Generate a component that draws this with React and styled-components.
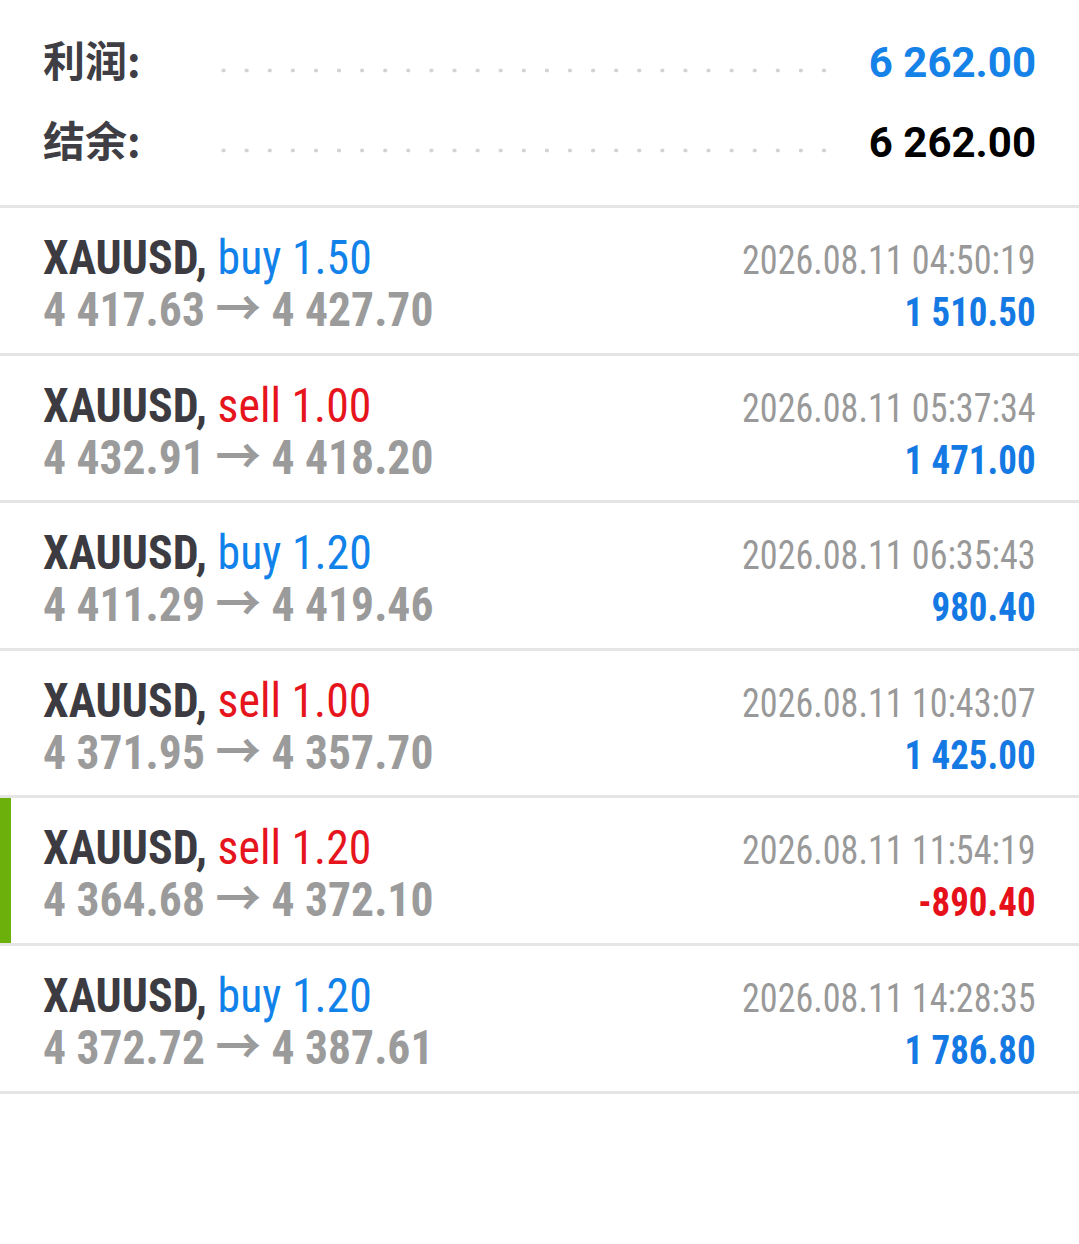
import React from 'react';
import styled, { createGlobalStyle } from 'styled-components';

const GlobalStyle = createGlobalStyle`
  body {
    margin: 0;
    background: #ffffff;
    font-family: "Roboto Condensed", Roboto, "Noto Sans CJK SC", sans-serif;
  }
`;

const Page = styled.div`
  width: 100%;
  min-height: 1244px;
  background: #ffffff;
`;

const Summary = styled.div`
  height: 208px;
  box-sizing: border-box;
  padding: 19px 43px 0 43px;
  border-bottom: 3px solid #e5e5e5;
`;

const SummaryRow = styled.div`
  display: flex;
  align-items: baseline;
  height: 80px;
  line-height: 80px;
`;

const SummaryLabel = styled.div`
  width: 169px;
  flex-shrink: 0;
  font-family: "Noto Sans CJK SC", sans-serif;
  font-size: 42px;
  font-weight: 700;
  color: #3e3e44;
`;

const Leader = styled.div`
  flex: 1;
  align-self: stretch;
  margin-right: 36px;
  background-image: radial-gradient(circle, #d2d2d2 1.7px, transparent 2.2px);
  background-size: 23.1px 5px;
  background-repeat: repeat-x;
  background-position: 0 48.5px;
`;

const SummaryValue = styled.div`
  font-family: Roboto, sans-serif;
  font-size: 42px;
  font-weight: 700;
  color: ${(p) => p.$color};
`;

const TradeRow = styled.div`
  display: grid;
  grid-template-columns: 1fr auto;
  grid-template-rows: 52px 52px;
  align-items: baseline;
  align-content: start;
  height: 120.6px;
  padding: 24px 43px 0 43px;
  border-bottom: 3px solid #e5e5e5;
  box-shadow: ${(p) => (p.$selected ? 'inset 11px 0 0 #6cb00c' : 'none')};
  line-height: 52px;
`;

/* the app's condensed face is narrower than Roboto Condensed */
const Narrow = styled.div`
  white-space: nowrap;
  transform: scaleX(${(p) => p.$scale});
  transform-origin: ${(p) => (p.$right ? 'right' : 'left')} center;
  text-align: ${(p) => (p.$right ? 'right' : 'left')};
`;

const Symbol = styled(Narrow)`
  font-size: 49px;
  color: #3b3b41;
`;

const SymbolName = styled.span`
  font-weight: 700;
`;

const Side = styled.span`
  font-weight: 400;
  color: ${(p) => (p.$type === 'buy' ? '#1182e9' : '#e6141c')};
`;

const Prices = styled(Narrow)`
  font-size: 49px;
  font-weight: 700;
  color: #9b9b9b;
`;

const Time = styled(Narrow)`
  font-size: 41px;
  font-weight: 400;
  color: #999999;
`;

const Profit = styled(Narrow)`
  font-size: 41px;
  font-weight: 700;
  color: ${(p) => (p.$negative ? '#e5101a' : '#1479e3')};
`;

const trades = [
  { type: 'buy', volume: '1.50', open: '4 417.63', close: '4 427.70', time: '2026.08.11 04:50:19', profit: '1 510.50' },
  { type: 'sell', volume: '1.00', open: '4 432.91', close: '4 418.20', time: '2026.08.11 05:37:34', profit: '1 471.00' },
  { type: 'buy', volume: '1.20', open: '4 411.29', close: '4 419.46', time: '2026.08.11 06:35:43', profit: '980.40' },
  { type: 'sell', volume: '1.00', open: '4 371.95', close: '4 357.70', time: '2026.08.11 10:43:07', profit: '1 425.00' },
  { type: 'sell', volume: '1.20', open: '4 364.68', close: '4 372.10', time: '2026.08.11 11:54:19', profit: '-890.40', selected: true },
  { type: 'buy', volume: '1.20', open: '4 372.72', close: '4 387.61', time: '2026.08.11 14:28:35', profit: '1 786.80' },
];

export default function App() {
  return (
    <Page>
      <GlobalStyle />
      <Summary>
        <SummaryRow>
          <SummaryLabel>利润:</SummaryLabel>
          <Leader />
          <SummaryValue $color="#1582e8">6 262.00</SummaryValue>
        </SummaryRow>
        <SummaryRow>
          <SummaryLabel>结余:</SummaryLabel>
          <Leader />
          <SummaryValue $color="#000000">6 262.00</SummaryValue>
        </SummaryRow>
      </Summary>
      {trades.map((t, i) => (
        <TradeRow key={i} $selected={t.selected}>
          <Symbol $scale={0.935}>
            <SymbolName>XAUUSD,</SymbolName> <Side $type={t.type}>{t.type} {t.volume}</Side>
          </Symbol>
          <Time $scale={0.88} $right>
            {t.time}
          </Time>
          <Prices $scale={0.93}>
            {t.open} → {t.close}
          </Prices>
          <Profit $scale={0.9} $right $negative={t.profit.startsWith('-')}>
            {t.profit}
          </Profit>
        </TradeRow>
      ))}
    </Page>
  );
}
